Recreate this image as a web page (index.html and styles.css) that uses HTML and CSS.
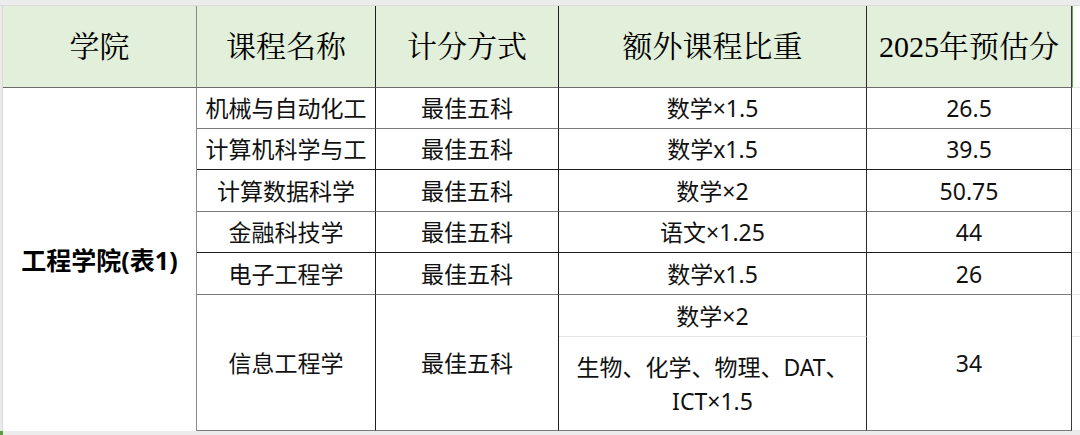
FILE: index.html
```html
<!DOCTYPE html>
<html lang="zh">
<head>
<meta charset="utf-8">
<link rel="stylesheet" href="styles.css">
</head>
<body>
<div class="sheet">
  <div class="topstrip"></div>
  <div class="main">
    <div class="leftstrip"></div>
    <div class="grid">
      <div class="c hd b-c1">学院</div>
      <div class="c hd b-c2">课程名称</div>
      <div class="c hd b-c3">计分方式</div>
      <div class="c hd b-c4">额外课程比重</div>
      <div class="c hd b-c5">2025年预估分</div>
      <div class="c pad hdpad"></div>

      <div class="c college b-c1">工程学院(表1)</div>

      <div class="c b-c2 r-gray">机械与自动化工</div>
      <div class="c b-c3 r-gray">最佳五科</div>
      <div class="c b-c4 r-gray">数学×1.5</div>
      <div class="c b-c5 r-gray">26.5</div>
      <div class="c pad"></div>

      <div class="c b-c2 r-dark">计算机科学与工</div>
      <div class="c b-c3 r-dark">最佳五科</div>
      <div class="c b-c4 r-dark">数学x1.5</div>
      <div class="c b-c5 r-dark">39.5</div>
      <div class="c pad"></div>

      <div class="c b-c2 r-gray">计算数据科学</div>
      <div class="c b-c3 r-gray">最佳五科</div>
      <div class="c b-c4 r-gray">数学×2</div>
      <div class="c b-c5 r-gray">50.75</div>
      <div class="c pad"></div>

      <div class="c b-c2 r-dark">金融科技学</div>
      <div class="c b-c3 r-dark">最佳五科</div>
      <div class="c b-c4 r-dark">语文×1.25</div>
      <div class="c b-c5 r-dark">44</div>
      <div class="c pad"></div>

      <div class="c b-c2 r-gray">电子工程学</div>
      <div class="c b-c3 r-gray">最佳五科</div>
      <div class="c b-c4 r-gray">数学x1.5</div>
      <div class="c b-c5 r-gray">26</div>
      <div class="c pad"></div>

      <div class="c b-c2 r-last span2">信息工程学</div>
      <div class="c b-c3 r-last span2">最佳五科</div>
      <div class="c b-c4 r-faint">数学×2</div>
      <div class="c b-c5 r-last span2">34</div>
      <div class="c pad"></div>
      <div class="c b-c4 r-last multi">生物、化学、物理、DAT、<br>ICT×1.5</div>
      <div class="c pad"></div>
    </div>
  </div>
  <div class="bottomstrip"><span class="mark"></span></div>
</div>
</body>
</html>
```

FILE: styles.css
```css
* { box-sizing: border-box; }
html, body { margin: 0; padding: 0; }
body {
  width: 1080px;
  height: 435px;
  overflow: hidden;
  background: #ffffff;
  font-family: "Noto Sans", "Noto Sans CJK SC", sans-serif;
  color: #111;
}
.sheet {
  display: flex;
  flex-direction: column;
  width: 1080px;
  height: 435px;
}
.topstrip {
  height: 6px;
  background: #ececec;
  border-bottom: 1px solid #dcdcdc;
}
.main {
  display: flex;
  height: 425px;
}
.leftstrip {
  width: 3px;
  background: #ebebeb;
  border-right: 1px solid #d8d8d8;
}
.grid {
  display: grid;
  grid-template-columns: 194px 179px 183px 308px 205px 8px;
  grid-template-rows: 82px 41px 41px 42px 41px 42px 42px 94px;
}
.c {
  display: flex;
  align-items: center;
  justify-content: center;
  text-align: center;
  font-size: 23px;
  line-height: 34px;
  white-space: nowrap;
  color: #111;
}
.hd {
  background: #e2efda;
  font-family: "Liberation Serif", "Noto Serif CJK SC", "Noto Sans CJK SC", serif;
  font-size: 30px;
  color: #000;
  border-bottom: 1px solid #6a6a6a;
}
.b-c1 { border-right: 1px solid #8a8a8a; }
.b-c2 { border-right: 1px solid #1e1e1e; }
.b-c3 { border-right: 1px solid #1e1e1e; }
.b-c4 { border-right: 1px solid #2a2a2a; }
.b-c5 { border-right: 1px solid #3a3a3a; }
.hdpad { border-bottom: none; background: #fff; border-left: 1px solid #6aa84f; }
.pad { border-bottom: 1px solid #e8e8e8; }
.college {
  grid-row: 2 / 9;
  font-weight: 700;
  font-size: 25px;
  color: #000;
}
.r-gray { border-bottom: 1px solid #7a7a7a; }
.r-dark { border-bottom: 1px solid #1e1e1e; }
.r-faint { border-bottom: 1px solid #e4e4e4; }
.r-last { border-bottom: 1px solid #7a7a7a; }
.span2 { grid-row: span 2; }
.multi { white-space: normal; }
.bottomstrip {
  flex: 1;
  background: #ececec;
  position: relative;
}
.mark {
  position: absolute;
  left: 0;
  top: 0;
  width: 3px;
  height: 4px;
  background: #5b9b3c;
}
```
